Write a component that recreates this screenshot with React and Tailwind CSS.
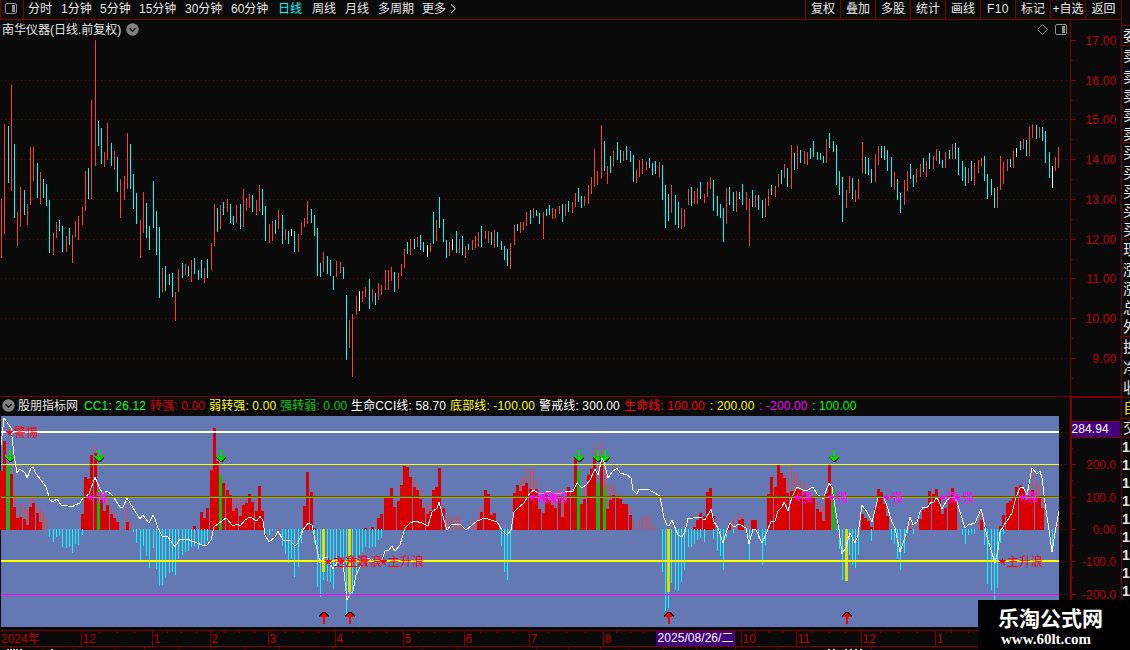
const periods = [
  { label: '分时', w: 'w-[33px]' },
  { label: '1分钟', w: 'w-[39px]' },
  { label: '5分钟', w: 'w-[39px]' },
  { label: '15分钟', w: 'w-[46px]' },
  { label: '30分钟', w: 'w-[46px]' },
  { label: '60分钟', w: 'w-[47px]' },
  { label: '日线', w: 'w-[34px]', active: true },
  { label: '周线', w: 'w-[33px]' },
  { label: '月线', w: 'w-[33px]' },
  { label: '多周期', w: 'w-[44px]' },
  { label: '更多', w: 'w-[26px]' },
];

const tools = ['复权', '叠加', '多股', '统计', '画线', 'F10', '标记', '+自选', '返回'];

const legend = [
  { text: 'CC1: 26.12', cls: 'w-[66px] text-[#00ff40]' },
  { text: '转强: 0.00', cls: 'w-[59px] text-[#d80000]' },
  { text: '弱转强: 0.00', cls: 'w-[71px] text-[#ffff00]' },
  { text: '强转弱: 0.00', cls: 'w-[71px] text-[#00d000]' },
  { text: '生命CCI线: 58.70', cls: 'w-[99px] text-white' },
  { text: '底部线: -100.00', cls: 'w-[89px] text-[#ffff00]' },
  { text: '警戒线: 300.00', cls: 'w-[85px] text-white' },
  { text: '生命线: 100.00', cls: 'w-[86px] text-[#ff0000]' },
  { text: ': 200.00', cls: 'w-[49px] text-[#ffff00]' },
  { text: ': -200.00', cls: 'w-[53px] text-[#ff00ff]' },
  { text: ': 100.00', cls: 'w-[46px] text-[#00ff00]' },
];

// x top bottom direction (r up, c down, w flat)
const candles = `
1 199 258 r,4 124 234 r,8 126 183 c,11 85 191 r,14 144 218 c,17 212 246 r,20 187 227 r,24 190 215 c,27 204 225 r,30 147 205 r,
33 147 181 r,37 163 198 c,40 172 204 r,43 179 198 c,46 184 206 c,49 200 253 c,53 233 255 r,56 222 238 r,59 220 231 c,62 226 252 c,
66 236 252 r,69 228 245 c,72 235 263 r,75 221 237 r,78 216 240 r,82 207 225 r,85 171 211 r,88 168 199 c,91 100 199 r,95 40 166 r,
98 121 146 c,101 128 164 c,104 152 167 r,107 123 160 r,111 143 166 c,114 151 170 r,117 157 192 c,120 179 218 r,124 176 200 r,127 133 189 r,
130 144 189 c,133 174 209 c,136 193 224 c,140 220 258 r,143 192 233 r,146 203 238 c,149 226 250 c,153 181 228 c,156 211 255 c,159 227 298 c,
162 268 292 r,165 266 291 c,169 274 285 c,172 273 297 c,175 292 321 r,178 269 292 r,182 263 278 c,185 264 275 r,188 266 276 c,191 260 282 r,
194 258 274 c,198 270 280 c,201 260 278 c,204 268 283 r,207 259 278 c,211 243 270 r,214 204 246 r,217 208 232 c,220 205 229 r,223 202 215 c,
227 199 212 r,230 204 223 c,233 216 225 c,236 205 223 r,240 204 229 c,243 189 227 r,246 198 211 r,249 194 208 r,252 195 212 c,256 200 215 r,
259 185 211 r,262 189 215 c,265 206 241 c,269 224 243 r,272 221 241 r,275 220 234 c,278 210 229 r,282 215 244 c,285 229 240 r,288 231 244 c,
291 229 236 w,294 231 252 c,298 234 252 r,301 223 235 r,304 218 227 r,307 201 224 r,311 209 223 c,314 215 236 c,317 228 276 c,320 263 277 c,
323 252 272 r,327 256 274 c,330 260 276 c,333 276 290 c,336 261 277 r,340 262 273 r,343 267 279 c,346 295 360 c,349 320 348 r,352 314 377 r,
356 296 315 r,359 291 311 w,362 291 302 r,365 287 297 r,369 279 309 c,372 289 302 r,375 293 305 c,378 283 300 r,381 285 295 r,385 270 290 r,
388 270 290 r,391 267 281 r,394 272 292 c,398 273 289 r,401 264 276 r,404 249 268 r,407 242 254 c,410 239 255 r,414 239 249 c,417 237 247 r,
420 235 250 c,423 242 252 c,427 245 257 w,430 243 252 r,433 212 244 c,436 220 241 r,439 197 228 c,443 219 242 c,446 240 258 c,449 242 256 r,
452 239 250 w,456 231 253 c,459 239 253 r,462 236 255 c,465 246 258 r,468 244 250 c,472 240 250 r,475 236 248 r,478 232 247 r,481 226 247 c,
485 231 239 r,488 231 243 r,491 232 245 c,494 230 248 r,497 232 247 c,501 241 250 c,504 246 260 c,507 249 266 c,510 243 269 r,514 225 245 r,
517 224 231 c,520 222 233 r,523 222 230 r,526 212 226 r,530 210 224 c,533 208 218 r,536 210 216 c,539 213 224 c,543 212 239 r,546 209 216 c,
549 205 215 c,552 208 219 r,555 209 218 r,559 206 214 r,562 204 222 c,565 204 216 r,568 201 212 c,572 202 213 r,575 193 207 r,578 188 202 c,
581 196 208 c,584 196 206 r,588 185 204 r,591 177 194 r,594 149 187 r,597 171 185 r,601 125 179 r,604 141 171 c,607 166 184 r,610 156 173 c,
613 151 166 r,617 142 160 c,620 150 163 c,623 151 161 r,626 146 160 c,630 151 162 c,633 155 182 c,636 170 183 r,639 160 177 r,642 159 174 r,
646 161 170 r,649 158 168 c,652 163 175 c,655 161 174 c,659 162 177 r,662 165 200 c,665 185 228 c,668 194 221 c,671 185 213 r,675 195 225 c,
678 202 228 c,681 208 229 r,684 209 227 r,688 189 205 r,691 187 206 c,694 191 204 r,697 188 204 r,700 182 199 c,704 194 203 r,707 182 197 r,
710 177 189 r,713 180 211 c,717 196 216 c,720 204 218 c,723 208 242 c,726 188 224 r,729 187 205 c,733 192 211 c,736 191 212 r,739 192 199 c,
742 184 205 c,746 192 210 r,749 199 246 r,752 190 207 c,755 195 207 r,758 195 210 c,762 200 218 c,765 199 217 r,768 189 206 r,771 185 195 c,
775 186 197 r,778 174 187 r,781 170 184 c,784 164 178 r,787 168 187 c,791 145 189 r,794 153 170 c,797 146 169 r,800 150 163 c,804 151 164 r,
807 152 165 r,810 148 159 c,813 141 157 c,817 152 160 c,820 153 160 c,823 156 163 c,826 139 163 r,829 133 148 c,833 141 152 c,836 145 185 c,
839 171 195 c,842 177 222 c,846 190 208 r,849 176 193 r,852 178 199 c,855 190 202 r,858 179 199 r,862 142 173 r,865 157 174 c,868 158 175 c,
871 169 183 c,875 154 182 r,878 146 165 r,881 146 158 c,884 146 160 c,887 150 171 c,891 157 187 c,894 172 190 r,897 179 200 c,900 193 213 c,
904 180 205 r,907 171 191 r,910 164 179 c,913 175 187 c,916 169 183 r,920 164 177 r,923 158 172 c,926 161 177 r,929 153 169 c,933 156 169 r,
936 149 161 r,939 151 164 c,942 160 168 c,945 152 168 r,949 150 159 c,952 144 159 r,955 143 159 c,958 148 175 c,962 161 181 c,965 167 186 c,
968 168 183 r,971 161 181 c,974 163 185 r,978 160 173 r,981 158 166 r,984 156 181 c,987 174 199 c,991 179 195 c,994 188 208 c,997 187 208 r,
1000 156 190 r,1003 162 184 r,1007 159 171 r,1010 159 167 c,1013 151 168 r,1016 148 157 w,1020 141 150 c,1023 139 149 r,1026 140 156 c,1029 127 156 r,
1032 124 138 r,1036 125 139 c,1039 127 138 r,1042 127 141 c,1045 131 163 c,1049 152 178 c,1052 166 188 w,1055 157 171 r,1058 147 168 r`
  .split(',')
  .map((row) => row.trim().split(' '));

const pairs = (s) => s.trim().split(/\s+/).map((p) => p.split(',').map(Number));

// wide red columns above zero: x,top
const redBars = pairs(`
1,471 4,441 8,466 11,474 14,507 17,518 20,517 24,519 27,525 30,507 33,503 37,513 40,522 82,514 85,477 88,479 91,455 95,453 98,490 101,500
104,511 107,505 111,514 114,518 117,522 127,522 194,526 201,512 204,518 207,508 211,470 214,428 217,461 220,475 223,483 227,490 230,495
233,511 236,508 240,516 243,505 246,503 249,494 252,502 256,511 259,486 262,511 304,506 307,472 311,492 314,528 365,528 372,527
378,518 381,514 385,496 388,496 391,488 394,507 398,501 401,485 404,466 407,467 410,477 414,487 417,490 420,499 423,508 427,514 430,511
433,490 436,487 439,468 443,508 478,520 481,512 485,490 488,494 491,515 494,513 497,522 514,493 517,485 520,491 523,486 526,483
530,489 533,490 536,489 539,509 543,513 546,495 549,500 552,505 555,508 559,496 562,517 565,500 568,487 572,492 575,456 578,470
581,504 584,499 588,475 591,469 594,458 597,482 601,463 604,487 607,509 610,500 613,495 617,496 620,499 623,504 626,504 630,515
694,527 697,520 700,513 704,516 707,492 710,488 713,516 729,523 739,520 742,519 752,520 755,520
768,494 771,477 775,487 778,465 781,473 784,478 787,493 791,491 794,491 797,489 800,490 804,492 807,497 810,498 813,497 817,509
820,512 823,521 826,493 829,465 833,490 862,514 865,518 868,521 871,527 875,507 878,489 881,492 884,504 887,516 910,529
920,519 923,510 926,508 929,491 933,494 936,489 939,497 942,514 945,508 949,496 952,488 955,500 981,520 1000,526 1003,515
1007,503 1010,501 1013,498 1016,487 1020,485 1023,489 1026,500 1029,497 1032,490 1036,497 1039,497 1042,508`);

// one pixel red spikes
const spikes = pairs(`
11,468 14,493 17,515 20,502 24,505 27,510 30,498 33,494 37,506 40,508 43,512 46,517 95,446 98,482 101,493 107,495 111,507 114,511 124,525 127,507
130,520 223,480 227,484 230,495 233,496 236,496 240,497 246,496 256,497 262,508 278,525 414,480 417,485 420,490 427,502 430,505 446,520
449,516 452,516 456,516 459,517 462,525 472,521 475,520 478,513 481,506 520,481 523,477 526,466 530,470 533,467 536,478 549,490 552,491
555,495 559,490 562,497 584,486 594,445 601,442 604,470 607,485 610,485 613,485 617,494 620,493 630,506 633,521 639,520 642,516
646,516 649,516 652,525 655,528 733,518 739,515 742,517 745,526 784,473 787,480 791,463 794,472 797,475 800,481 804,482 807,490
810,495 813,496 817,502 820,504 823,508 910,523 916,526 958,522 978,521 981,512 1020,484 1032,473 1036,482 1039,486 1042,495 1058,522`);

// cyan columns below zero: x,bottom
const cyanBars = pairs(`
49,537 53,542 56,537 59,536 62,547 66,548 69,547 72,553 75,544 78,545 82,535 133,532 136,543 140,560 143,546 146,556 149,568 153,548
156,569 159,586 162,585 165,578 169,573 172,572 175,575 178,559 182,555 185,552 188,551 191,547 194,546 198,549 201,545 204,545 207,541
269,535 272,531 275,530 282,546 285,554 288,563 291,559 294,577 298,567 301,543 314,543 317,587 320,597 323,580 327,581 330,582
333,589 336,568 340,557 343,557 346,615 349,594 352,594 356,575 359,555 362,552 365,547 369,548 372,547 375,547 378,540 381,538
501,546 504,572 507,580 510,560 662,572 665,611 668,608 671,583 675,590 678,591 681,582 684,570 688,547 691,547 694,544 697,540
700,538 704,542 713,539 717,551 720,556 723,570 726,538 733,533 749,562 758,539 762,565 765,545 836,530 839,549 842,580 849,555
852,565 855,568 858,555 871,541 891,540 894,544 897,559 900,570 904,553 907,533 913,534 962,535 965,544 968,535 971,534 974,534
984,545 987,584 991,590 994,600 997,588 1000,543 1003,534 1049,538 1052,552 1055,533`);

const greenBars = pairs('8,466 98,490 220,475 578,470 597,482 604,487 833,490');
const yellowBars = pairs('323,572 349,592 668,592 846,581');

const lifeLine = `1,445 4,418 11,428 14,455 17,473 20,469 25,473 27,478 31,468 33,467 36,474 41,480 46,487 50,500 53,502 57,499 61,505 68,506
72,507 75,505 80,503 83,498 89,494 95,477 99,487 103,494 107,491 112,495 120,507 123,507 127,498 133,508 140,519 143,515 149,523 153,515
155,519 158,528 162,536 168,537 175,547 180,539 187,539 197,543 202,545 207,545 211,540 214,527 218,524 223,520 226,518 233,526 237,524
240,526 245,520 250,517 257,521 260,516 263,521 265,535 269,542 275,537 278,531 283,540 290,541 295,546 298,543 303,530 308,523 312,525
315,540 320,563 324,557 328,558 333,569 337,562 343,562 347,600 350,594 353,591 356,575 362,563 367,558 373,560 382,560 385,551 389,550
392,546 395,551 400,545 405,528 410,523 415,521 422,523 428,526 432,512 437,508 439,502 442,513 447,530 451,525 460,524 466,530
477,521 485,518 497,522 502,530 507,535 511,530 514,512 518,508 524,503 530,493 534,490 538,493 542,494 548,491 558,494 565,492 573,491
577,483 582,488 587,484 590,480 595,469 598,475 602,458 604,462 608,478 612,472 617,468 620,473 627,475 631,478 633,490 637,494
639,489 648,489 653,492 660,496 664,518 667,525 669,526 672,520 678,535 682,537 685,532 688,518 693,518 700,517 705,520 711,509
714,522 718,528 723,543 727,530 730,523 734,527 739,524 746,528 749,544 753,529 756,530 762,543 767,532 771,521 775,521 778,511 782,507
784,502 788,511 792,497 797,487 803,490 808,490 813,487 817,494 823,499 829,483 832,487 835,507 839,530 842,554 846,547 850,533 855,543
858,535 862,505 867,512 872,522 878,498 883,496 886,503 892,522 895,528 900,552 904,540 907,530 910,517 913,525 917,522 920,512
923,507 927,508 931,502 934,502 937,497 942,509 947,500 953,496 957,502 960,512 965,528 968,525 975,523 981,509 983,517 987,537
995,563 998,550 1000,532 1004,525 1007,521 1012,513 1016,497 1020,488 1023,487 1027,495 1032,468 1037,474 1040,471 1042,478 1045,503
1049,530 1052,552 1055,533 1059,511`;

const marks = [
  { x: 9, y: 432, tx: 14, text: '警惕', color: '#ff0000' },
  { x: 90, y: 497, tx: 95, text: '强', color: '#ff00ff' },
  { x: 532, y: 497, tx: 536, text: '强', color: '#ff00ff' },
  { x: 542, y: 497, tx: 546, text: '强', color: '#ff00ff' },
  { x: 552, y: 497, tx: 556, text: '强', color: '#ff00ff' },
  { x: 797, y: 497, tx: 801, text: '强', color: '#ff00ff' },
  { x: 831, y: 497, tx: 836, text: '强', color: '#ff00ff' },
  { x: 886, y: 497, tx: 891, text: '强', color: '#ff00ff' },
  { x: 942, y: 497, tx: 946, text: '强', color: '#ff00ff' },
  { x: 957, y: 497, tx: 962, text: '强', color: '#ff00ff' },
  { x: 1022, y: 497, tx: 1026, text: '强', color: '#ff00ff' },
  { x: 328, y: 561, tx: 333, text: '主升浪', color: '#ff0000' },
  { x: 341, y: 561, tx: 346, text: '主升浪', color: '#ff0000' },
  { x: 383, y: 561, tx: 388, text: '主升浪', color: '#ff0000' },
  { x: 1002, y: 561, tx: 1007, text: '主升浪', color: '#ff0000' },
];

const priceTicks = [
  ['17.00', 40], ['16.00', 80], ['15.00', 119], ['14.00', 159], ['13.00', 199],
  ['12.00', 239], ['11.00', 278], ['10.00', 318], ['9.00', 358],
];
const cciTicks = [['200.0', 464], ['100.0', 497], ['0.00', 529], ['-100.0', 561], ['-200.0', 594]];

const months = [
  [81, '12'], [152, '1'], [210, '2'], [268, '3'], [335, '4'], [403, '5'], [464, '6'],
  [529, '7'], [603, '8'], [656, ''], [741, '10'], [796, '11'], [861, '12'], [935, '1'], [1000, ''],
];

const sideRows = [
  ['委', 'h-[20px]', true],
  ['卖', 'h-[21px]'], ['卖', 'h-[19px]'], ['卖', 'h-[19px]'], ['卖', 'h-[19px]'], ['卖', 'h-[19px]', true],
  ['买', 'h-[20px]'], ['买', 'h-[19px]'], ['买', 'h-[19px]'], ['买', 'h-[19px]'], ['买', 'h-[20px]', true],
  ['现', 'h-[20px]'], ['涨', 'h-[19px]'], ['涨', 'h-[19px]'], ['总', 'h-[19px]'], ['外', 'h-[20px]', true],
  ['换', 'h-[21px]'], ['净', 'h-[20px]'], ['收', 'h-[20px]', true],
];

const fontText = "font-['Liberation_Sans','Noto_Sans_CJK_SC',sans-serif]";
const dirColor = { r: '#ff3c3c', c: '#00ffff', w: '#ffffff' };
const STAR = '0,-5 1.3,-1.5 5,-1.5 2,0.8 3.1,4.3 0,2.2 -3.1,4.3 -2,0.8 -5,-1.5 -1.3,-1.5';

function ChevronBadge() {
  return (
    <svg className="block size-[13px] shrink-0" viewBox="0 0 13 13">
      <circle cx="6.5" cy="6.5" r="6.2" fill="#808080" />
      <path d="M3.5 5.2 L6.5 8.2 L9.5 5.2" fill="none" stroke="#151515" strokeWidth="1.5" />
    </svg>
  );
}

function PanelIcon() {
  return (
    <svg className="block h-[11px] w-3 shrink-0" viewBox="0 0 12 11">
      <rect x="0.5" y="0.5" width="11" height="10" rx="1.5" fill="none" stroke="#909090" />
      <rect x="7" y="2" width="3" height="7" fill="#909090" />
    </svg>
  );
}

function TopBar() {
  return (
    <div className="flex h-5 shrink-0 border-b border-[#800000] text-[12px] leading-[19px] text-[#e6e6e6]">
      <div className="flex w-6 shrink-0 items-center border-x border-[#800000] pb-[2px] pl-1">
        <PanelIcon />
      </div>
      <div className="flex flex-1 pl-1">
        {periods.map((p) => (
          <div key={p.label} className={`${p.w} shrink-0 whitespace-nowrap ${p.active ? 'text-[#00ffff]' : ''}`}>{p.label}</div>
        ))}
        <svg className="mt-[4px] h-[10px] w-[10px]" viewBox="0 0 10 10">
          <path d="M3 0.5 L7.5 4.8 L3 9" fill="none" stroke="#e6e6e6" />
        </svg>
      </div>
      <div className="flex w-[316px] shrink-0">
        {tools.map((t) => (
          <div key={t} className={`w-[35px] shrink-0 whitespace-nowrap border-l border-[#800000] text-center last:w-[36px] ${t === 'F10' ? 'tracking-[0.4px]' : ''}`}>{t}</div>
        ))}
      </div>
    </div>
  );
}

function PriceChart() {
  return (
    <div className="relative h-[376px] shrink-0">
      <svg className="block h-[376px] w-[1121px]" viewBox="0 20 1121 376" shapeRendering="crispEdges">
        {priceTicks.slice(1).map(([label, y]) => (
          <line key={label} x1="1" x2="1068" y1={y + 0.5} y2={y + 0.5} stroke="#800000" strokeDasharray="1 3" />
        ))}
        {candles.map(([x, top, bottom, dir]) => (
          <rect key={x} x={x} y={top} width="1" height={bottom - top} fill={dirColor[dir]} />
        ))}
        <rect x="1070" y="20" width="1" height="376" fill="#800000" />
        {priceTicks.map(([label, y]) => (
          <g key={label}>
            <rect x="1071" y={y} width="5" height="1" fill="#800000" />
            <rect x="1071" y={y + 20} width="2" height="1" fill="#800000" />
            <text x="1116.5" y={y + 5} textAnchor="end" fontSize="12" letterSpacing="0.2" fill="#c00000">{label}</text>
          </g>
        ))}
      </svg>
      <div className="absolute left-[2px] top-[2px] flex h-[15px] items-center gap-[5px] text-[12px] text-[#e6e6e6]">
        <span>南华仪器(日线.前复权)</span>
        <ChevronBadge />
      </div>
      <div className="absolute right-[54px] top-[4px] flex items-center gap-[7px]">
        <svg className="block size-[11px]" viewBox="0 0 11 11">
          <path d="M5.5 0.5 L10.5 5.5 L5.5 10.5 L0.5 5.5 Z" fill="none" stroke="#808080" />
        </svg>
        <PanelIcon />
      </div>
    </div>
  );
}

function SellArrow({ x }) {
  return (
    <g>
      <path d={`M${x - 4} 456 v2 L${x} 462 h2 L${x + 6} 458 v-2 Z`} fill="#103010" />
      <path d={`M${x - 4} 455 L${x} 457 V450 h2 v7 L${x + 6} 455 v1 L${x + 2} 461 h-2 L${x - 4} 456 Z`} fill="#00e000" />
    </g>
  );
}

function BuyArrow({ x }) {
  return (
    <g>
      <path d={`M${x - 4} 617 v-1 L${x - 1} 612 h4 L${x + 6} 616 v1 Z`} fill="#200000" />
      <path d={`M${x - 3} 617 L${x} 613 h2 L${x + 5} 617 Z`} fill="#ff0000" />
      <rect x={x} y="613" width="2" height="11" fill="#ff0000" />
    </g>
  );
}

function IndicatorChart() {
  return (
    <svg className="block h-[214px] w-[1121px] shrink-0" viewBox="0 416 1121 214" shapeRendering="crispEdges">
      <rect x="1" y="416" width="1058" height="211" fill="#6478b4" />
      {spikes.map(([x, y]) => (
        <rect key={x} x={x} y={y} width="1" height={530 - y} fill="#f04040" />
      ))}
      {redBars.map(([x, y]) => (
        <rect key={x} x={x - 1} y={y} width="3" height={530 - y} fill="#d80000" />
      ))}
      {cyanBars.map(([x, y]) => (
        <rect key={x} x={x} y="529" width="1" height={y - 529} fill="#00ffff" />
      ))}
      {greenBars.map(([x, y]) => (
        <rect key={x} x={x - 1} y={y} width="3" height={530 - y} fill="#00c800" />
      ))}
      {yellowBars.map(([x, y]) => (
        <rect key={x} x={x - 1} y="529" width="3" height={y - 529} fill="#e0e000" />
      ))}
      {[9, 98, 220, 578, 597, 604, 833].map((x) => <SellArrow key={x} x={x} />)}
      {[323, 349, 668, 846].map((x) => <BuyArrow key={x} x={x} />)}
      <polyline points={lifeLine} fill="none" stroke="#ffffff" />
      <rect x="1" y="431" width="1058" height="2" fill="#ffffff" />
      <rect x="1" y="464" width="1058" height="1" fill="#ffff00" />
      <rect x="1" y="496" width="1058" height="1" fill="#ff0000" />
      <rect x="1" y="497" width="1058" height="1" fill="#00ff00" />
      <rect x="1" y="560" width="1058" height="2" fill="#ffff00" />
      <rect x="1" y="594" width="1058" height="1" fill="#ff00ff" />
      {marks.map((m) => (
        <g key={m.x} fill={m.color}>
          <polygon points={STAR} transform={`translate(${m.x + 0.5} ${m.y + 0.5}) scale(0.75)`} />
          <text x={m.tx} y={m.y + 5} fontSize="12">{m.text}</text>
        </g>
      ))}

      {/* value axis */}
      <rect x="1070" y="416" width="2" height="214" fill="#800000" />
      {[432, ...cciTicks.map((t) => t[1])].map((y) => (
        <g key={y} fill="#800000">
          <rect x="1061" y={y} width="1" height="1" />
          <rect x="1065" y={y} width="1" height="1" />
          <rect x="1072" y={y} width="4" height="1" />
          <rect x="1072" y={y + 16} width="1" height="1" />
        </g>
      ))}
      {cciTicks.map(([label, y]) => (
        <text key={label} x="1116" y={y + 5} textAnchor="end" fontSize="12" fill="#c00000">{label}</text>
      ))}
      <rect x="1072" y="421" width="48" height="17" fill="#800000" />
      <rect x="1072" y="422" width="48" height="15" fill="#400080" />
      <text x="1071.5" y="433" fontSize="12" fill="#ffffff" letterSpacing="0.1">284.94</text>
    </svg>
  );
}

function TimeAxis() {
  return (
    <svg className="block h-5 w-[1121px] shrink-0" viewBox="0 630 1121 20" shapeRendering="crispEdges">
      <rect x="0" y="630" width="1121" height="1" fill="#800000" />
      <rect x="0" y="646" width="1121" height="1" fill="#800000" />
      <text x="1" y="643" fontSize="12" fill="#c00000">2024年</text>
      {months.map(([x, label], i) => {
        const next = months[i + 1] ? months[i + 1][0] : 1070;
        const step = (next - x) / 4;
        return (
          <g key={x}>
            <rect x={x} y="631" width="1" height="15" fill="#800000" />
            <text x={x + 1.5} y="643" fontSize="12" fill="#c00000">{label}</text>
            {[1, 2, 3].map((n) => (
              <rect key={n} x={Math.round(x + n * step)} y="631" width="1" height="2" fill="#800000" />
            ))}
          </g>
        );
      })}
      {[11, 42, 73, 115, 144, 178, 211, 245, 279, 332, 422, 457, 536, 568, 600, 628, 663, 696, 735, 777, 871].map((x) => (
        <rect key={x} x={x} y="647" width="1" height="2" fill="#800000" />
      ))}
      {[7, 10, 13, 16, 20, 51, 828, 833, 845, 850, 855, 860].map((x) => (
        <rect key={x} x={x} y="649" width="2" height="1" fill="#e6e6e6" />
      ))}
      <rect x="656" y="631" width="79" height="15" fill="#400080" />
      <text x="657.5" y="642" fontSize="12" fill="#ffffff" textLength="76">2025/08/26/二</text>
    </svg>
  );
}

function SideColumn() {
  return (
    <div className="flex w-[9px] shrink-0 flex-col overflow-hidden border-l border-[#800000] pt-[25px] text-[15px] text-[#e6e6e6]">
      <div className="border-t border-[#800000]" />
      {sideRows.map(([text, h, line], i) => (
        <div key={i} className={`${h} shrink-0 overflow-hidden pl-px leading-[20px] ${line ? 'border-b border-[#800000]' : ''}`}>
          <span className="block w-4">{text}</span>
        </div>
      ))}
      <div className="h-[21px] shrink-0 overflow-hidden border-b border-[#800000] pl-px leading-[20px] text-[#e0e000]">
        <span className="block w-4">自</span>
      </div>
      <div className="h-[19px] shrink-0 overflow-hidden border-b border-[#800000] pl-px leading-[18px]">
        <span className="block w-4">交</span>
      </div>
      {Array.from({ length: 9 }, (_, i) => (
        <div key={i} className="h-[18px] shrink-0 text-[14px] font-bold leading-[18px]">1</div>
      ))}
    </div>
  );
}

export default function App() {
  return (
    <div className={`relative flex h-[650px] w-[1130px] overflow-hidden bg-[#0a0a0a] ${fontText}`}>
      <div className="flex w-[1121px] shrink-0 flex-col">
        <TopBar />
        <PriceChart />
        <div className="flex h-5 shrink-0 border-t border-[#800000] text-[12px] leading-[17px]">
          <div className="flex w-[1070px] items-center whitespace-nowrap pl-[2px]">
            <div className="-mt-[2px]">
              <ChevronBadge />
            </div>
            <span className="ml-[3px] w-[66px] shrink-0 text-[#e6e6e6]">股朋指标网</span>
            {legend.map((l) => (
              <span key={l.text} className={`shrink-0 tracking-[0.14px] ${l.cls}`}>{l.text}</span>
            ))}
          </div>
          <div className="flex-1 border-l-2 border-t border-[#800000]" />
        </div>
        <IndicatorChart />
        <TimeAxis />
      </div>
      <SideColumn />

      <div className="absolute bottom-0 right-0 flex h-[50px] w-[152px] flex-col bg-black text-white">
        <div className="mt-[7px] h-[24px] pl-[20px] text-[21px] font-bold leading-[24px]">乐淘公式网</div>
        <div className="h-[16px] pl-[23px] font-['Liberation_Serif',serif] text-[15px] font-bold leading-[16px]">www.60lt.com</div>
      </div>
    </div>
  );
}
